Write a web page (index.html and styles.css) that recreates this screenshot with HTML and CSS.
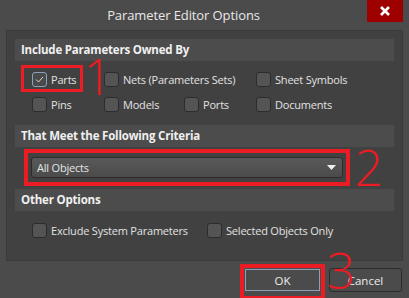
FILE: index.html
```html
<!DOCTYPE html>
<html lang="en">
<head>
  <meta charset="UTF-8">
  <title>Parameter Editor Options</title>
  <link rel="stylesheet" href="styles.css">
</head>
<body>
  <div class="dialog">
    <div class="titlebar">
      <div class="title">Parameter Editor Options</div>
      <div class="close">
        <svg width="12" height="12" viewBox="0 0 12 12"><path d="M2 2 L10 10 M10 2 L2 10" stroke="#fff" stroke-width="2.6"/></svg>
      </div>
    </div>

    <div class="panel">
      <div class="section-head">Include Parameters Owned By</div>
      <div class="owners">
        <label class="check"><span class="box checked"><svg width="9" height="7" viewBox="0 0 9 7"><path d="M1 3.5 L3.5 6 L8 1" fill="none" stroke="#d8d8d8" stroke-width="1"/></svg></span>Parts</label>
        <label class="check wide"><span class="box"></span>Nets (Parameters Sets)</label>
        <label class="check"><span class="box"></span>Sheet Symbols</label>
        <label class="check"><span class="box"></span>Pins</label>
        <label class="check"><span class="box"></span>Models</label>
        <label class="check"><span class="box"></span>Ports</label>
        <label class="check"><span class="box"></span>Documents</label>
      </div>

      <div class="section-head">That Meet the Following Criteria</div>
      <div class="criteria">
        <div class="select">
          <span>All Objects</span>
          <svg width="9" height="5" viewBox="0 0 9 5"><path d="M0 0 H9 L4.5 5 Z" fill="#f0f0f0"/></svg>
        </div>
      </div>

      <div class="section-head">Other Options</div>
      <div class="others">
        <label class="check"><span class="box"></span>Exclude System Parameters</label>
        <label class="check"><span class="box"></span>Selected Objects Only</label>
      </div>
    </div>

    <div class="buttons">
      <button class="btn ok">OK</button>
      <button class="btn">Cancel</button>
    </div>

    <div class="mark mark-1"></div>
    <div class="num num-1">1</div>
    <div class="mark mark-2"></div>
    <div class="num num-2">2</div>
    <div class="mark mark-3"></div>
    <div class="num num-3">3</div>
  </div>
</body>
</html>
```

FILE: styles.css
```css
html, body {
  margin: 0;
  padding: 0;
  overflow: hidden;
}
body {
  background-color: #4b4b4b;
  font-family: "Open Sans", "Noto Sans", sans-serif;
  font-size: 11px;
  letter-spacing: -0.2px;
  color: #e6e6e6;
}
.dialog {
  position: relative;
  width: 409px;
  height: 298px;
}
.titlebar {
  display: flex;
  height: 30px;
}
.title {
  flex: 1;
  text-align: center;
  font-size: 13px;
  letter-spacing: -0.1px;
  line-height: 30px;
  color: #e8e8e8;
}
.close {
  width: 36px;
  height: 22px;
  margin-right: 6px;
  background-color: #9e0000;
  display: flex;
  align-items: center;
  justify-content: center;
}
.panel {
  margin: 0 6px;
  height: 231px;
  border: 1px solid #3a3a3a;
  background-color: #414141;
  padding: 8px 8px 0 8px;
  box-sizing: border-box;
}
.section-head {
  height: 22px;
  line-height: 21px;
  padding-left: 6px;
  background-color: #4c4c4c;
  font-size: 11.5px;
  font-weight: bold;
  color: #f0f0f0;
}
.owners {
  display: grid;
  grid-template-columns: 72px 80px 72px 1fr;
  grid-auto-rows: 16px;
  row-gap: 9px;
  padding: 10px 0 0 17px;
  height: 64px;
  box-sizing: border-box;
}
.owners .wide {
  grid-column: span 2;
}
.check {
  display: flex;
  align-items: center;
  gap: 4px;
  height: 16px;
  white-space: nowrap;
  color: #e2e2e2;
}
.box {
  width: 15px;
  height: 15px;
  border: 1px solid #2c2c2c;
  border-radius: 3px;
  background-color: #545454;
  display: flex;
  align-items: center;
  justify-content: center;
  box-sizing: border-box;
}
.box.checked {
  background-color: #4a4a4a;
  border-color: #8aa2c0;
}
.criteria {
  padding: 10px 0 0 16px;
  height: 42px;
  box-sizing: border-box;
}
.select {
  width: 312px;
  height: 21px;
  border: 1px solid #2c2c2c;
  border-radius: 3px;
  background: linear-gradient(#595959, #4b4b4b);
  display: flex;
  align-items: center;
  justify-content: space-between;
  padding: 0 6px 0 5px;
  box-sizing: border-box;
  color: #e6e6e6;
}
.others {
  display: flex;
  padding: 11px 0 0 17px;
}
.others .check {
  width: 175px;
}
.buttons {
  display: flex;
  justify-content: flex-end;
  gap: 9px;
  padding: 7px 7px 0 0;
}
.btn {
  width: 73px;
  height: 24px;
  font-family: inherit;
  font-size: 11.5px;
  color: #ececec;
  background-color: #4b4b4b;
  border: 1px solid #2c2c2c;
  border-radius: 3px;
}
.btn.ok {
  border-color: #8ea0b8;
  border-radius: 0;
  width: 75px;
  height: 22px;
  margin-top: 1px;
}
.mark {
  position: absolute;
  border: 3px solid #ec1c24;
  box-sizing: border-box;
}
.mark-1 {
  left: 21px;
  top: 65px;
  width: 62px;
  height: 27px;
}
.mark-2 {
  left: 24px;
  top: 149px;
  width: 326px;
  height: 37px;
  border-width: 4px;
}
.mark-3 {
  left: 240px;
  top: 264px;
  width: 85px;
  height: 36px;
  border-width: 4px;
}
.num {
  position: absolute;
  color: #ec1c24;
  font-family: "Open Sans", sans-serif;
  font-weight: 300;
  font-size: 50px;
  letter-spacing: 0;
  line-height: 1;
}
.num-1 {
  left: 84px;
  top: 51px;
}
.num-2 {
  left: 355px;
  top: 142px;
}
.num-3 {
  left: 327px;
  top: 245px;
}
```
